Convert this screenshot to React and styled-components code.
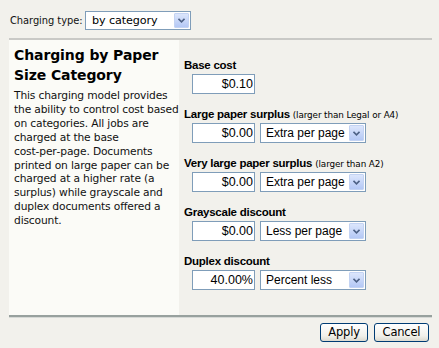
import React from "react";
import styled, { createGlobalStyle } from "styled-components";

const Global = createGlobalStyle`
  html, body { margin: 0; padding: 0; }
  body {
    background: #f2f1ec;
    font-family: "DejaVu Sans", Verdana, sans-serif;
    color: #000;
    width: 439px;
    height: 348px;
    overflow: hidden;
  }
`;

const TopBar = styled.div`
  display: flex;
  align-items: center;
  gap: 5px;
  height: 18px;
  padding: 11px 0 9px 10px;
`;

const TopLabel = styled.span`
  font-size: 9.9px;
  letter-spacing: -0.05px;
  color: #111;
  width: 70px;
  white-space: nowrap;
`;

const Main = styled.div`
  margin: 0 7px 0 9px;
  border-top: 2px solid #c9c9c6;
  border-bottom: 2px solid #98a19e;
  box-shadow: 0 1px 0 #d6d9d6;
  display: flex;
  height: 275px;
`;

const LeftPanel = styled.div`
  width: 165px;
  background: #fbfbf7;
  padding: 5px 0 0 5px;
`;

const Heading = styled.h2`
  margin: 0;
  font-family: "DejaVu Sans", Verdana, sans-serif;
  font-size: 14px;
  line-height: 20px;
  font-weight: bold;
  letter-spacing: -0.1px;
`;

const Desc = styled.p`
  margin: 4px 0 0;
  font-size: 10.7px;
  line-height: 13.9px;
  letter-spacing: -0.15px;
  color: #111;
`;

const RightPanel = styled.div`
  flex: 1;
  padding: 18px 0 0 5px;
  display: flex;
  flex-direction: column;
  gap: 13px;
`;

const Group = styled.div`
  display: flex;
  flex-direction: column;
`;

const Label = styled.div`
  height: 15px;
  font-family: "Liberation Sans", Arial, sans-serif;
  font-size: 11.5px;
  line-height: 15px;
  font-weight: bold;
  letter-spacing: -0.25px;
  white-space: nowrap;
`;

const Note = styled.span`
  font-family: "DejaVu Sans", Verdana, sans-serif;
  font-weight: normal;
  font-size: 8.8px;
  letter-spacing: -0.1px;
  line-height: 0;
`;

const Row = styled.div`
  display: flex;
  gap: 5px;
  margin: 1px 0 0 8px;
`;

const TextBox = styled.input`
  box-sizing: border-box;
  width: 63px;
  height: 20px;
  border: 1px solid #7f9db9;
  background: #fff;
  font-family: "Liberation Sans", Arial, sans-serif;
  font-size: 12.5px;
  text-align: right;
  padding: 0 1px 0 2px;
  margin: 0;
  color: #000;
  outline: none;
`;

const SelectBox = styled.div`
  box-sizing: border-box;
  width: ${(p) => p.$w || 106}px;
  height: ${(p) => p.$h || 20}px;
  border: 1px solid #7f9db9;
  background: #fff;
  display: flex;
  align-items: center;
  padding: 1px;
`;

const SelectText = styled.span`
  flex: 1;
  padding-left: ${(p) => (p.$tahoma ? 5 : 4)}px;
  font-family: ${(p) => (p.$tahoma ? '"DejaVu Sans", Verdana, sans-serif' : '"Liberation Sans", Arial, sans-serif')};
  font-size: ${(p) => p.$fs || 12}px;
  letter-spacing: ${(p) => (p.$tahoma ? "-0.1px" : "0")};
  white-space: nowrap;
  overflow: hidden;
  color: #000;
`;

const ArrowBtn = styled.span`
  width: 15px;
  height: 100%;
  box-sizing: border-box;
  border: 1px solid #c3d3f3;
  border-radius: 1px;
  background: linear-gradient(#dce6fc, #b4c8f5);
  display: flex;
  align-items: center;
  justify-content: center;
`;

const Footer = styled.div`
  display: flex;
  justify-content: flex-end;
  gap: 6px;
  padding: 6px 10px 0 0;
`;

const Button = styled.button`
  box-sizing: border-box;
  width: ${(p) => p.$w}px;
  height: 19px;
  border: 1px solid #003c74;
  border-radius: 3px;
  background: linear-gradient(#ffffff, #f1f0ea 70%, #dcdad0);
  font-family: "DejaVu Sans", Verdana, sans-serif;
  font-size: 11.5px;
  letter-spacing: -0.2px;
  padding: 0;
  color: #000;
  line-height: 17px;
`;

function Chevron() {
  return (
    <svg width="7" height="5" viewBox="0 0 7 5">
      <path d="M0.5 0.8 L3.5 3.8 L6.5 0.8" fill="none" stroke="#4d6185" strokeWidth="1.6" />
    </svg>
  );
}

function Select({ value, w, h, tahoma, fs }) {
  return (
    <SelectBox $w={w} $h={h}>
      <SelectText $tahoma={tahoma} $fs={fs}>{value}</SelectText>
      <ArrowBtn>
        <Chevron />
      </ArrowBtn>
    </SelectBox>
  );
}

const groups = [
  { label: "Base cost", value: "$0.10" },
  { label: "Large paper surplus", note: "(larger than Legal or A4)", value: "$0.00", select: "Extra per page" },
  { label: "Very large paper surplus", note: "(larger than A2)", value: "$0.00", select: "Extra per page" },
  { label: "Grayscale discount", value: "$0.00", select: "Less per page" },
  { label: "Duplex discount", value: "40.00%", select: "Percent less" },
];

export default function App() {
  return (
    <>
      <Global />
      <TopBar>
        <TopLabel>Charging type:</TopLabel>
        <Select value="by category" w={106} h={19} tahoma fs={11.2} />
      </TopBar>
      <Main>
        <LeftPanel>
          <Heading>
            Charging by Paper
            <br />
            Size Category
          </Heading>
          <Desc>
            {"This charging model provides the ability to control cost based on categories. All jobs are charged at the base cost\u2011per\u2011page. Documents printed on large paper can be charged at a higher rate (a surplus) while grayscale and duplex documents offered a discount."}
          </Desc>
        </LeftPanel>
        <RightPanel>
          {groups.map((g) => (
            <Group key={g.label}>
              <Label>
                {g.label} {g.note && <Note>{g.note}</Note>}
              </Label>
              <Row>
                <TextBox defaultValue={g.value} readOnly />
                {g.select && <Select value={g.select} />}
              </Row>
            </Group>
          ))}
        </RightPanel>
      </Main>
      <Footer>
        <Button $w={48}>Apply</Button>
        <Button $w={55}>Cancel</Button>
      </Footer>
    </>
  );
}
